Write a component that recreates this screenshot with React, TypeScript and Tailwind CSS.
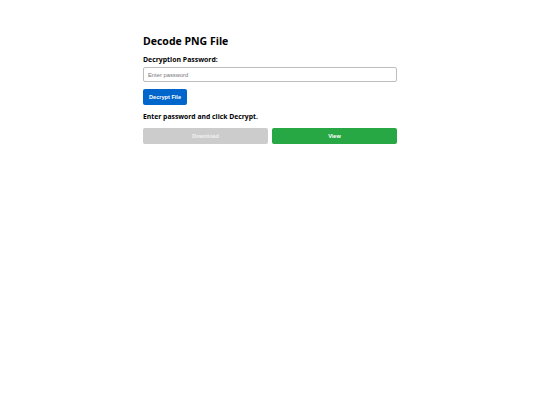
export default function App() {
  return (
    <div className="min-h-[405px] bg-white" style={{ fontFamily: '"Open Sans", sans-serif' }}>
      <div className="mx-auto w-[254px] pt-[33px]">
        <h1 className="text-[10.5px] font-bold leading-[16px] text-black">Decode PNG File</h1>
        <label className="mt-[5px] block text-[6.9px] font-bold leading-[11px] text-black">
          Decryption Password:
        </label>
        <input
          type="password"
          placeholder="Enter password"
          className="mt-[2px] block h-[15px] w-full rounded-[2px] border border-[#bdbdbd] px-[4px] text-[5.8px] placeholder:text-[#777] outline-none"
          style={{ fontFamily: '"Liberation Sans", Arial, sans-serif' }}
        />
        <button
          className="mt-[7px] block h-[16px] rounded-[2px] bg-[#0066cc] px-[6px] text-[5.6px] font-bold text-white"
          style={{ fontFamily: '"Liberation Sans", Arial, sans-serif' }}
        >
          Decrypt File
        </button>
        <p className="mt-[6px] text-[6.8px] font-bold leading-[11px] text-black">Enter password and click Decrypt.</p>
        <div
          className="mt-[6px] flex gap-[4px]"
          style={{ fontFamily: '"Liberation Sans", Arial, sans-serif' }}
        >
          <button className="h-[16px] flex-1 rounded-[2px] bg-[#cccccc] text-[5.6px] font-bold text-[#f2f2f2]">
            Download
          </button>
          <button className="h-[16px] flex-1 rounded-[2px] bg-[#28a745] text-[5.6px] font-bold text-white">
            View
          </button>
        </div>
      </div>
    </div>
  )
}
